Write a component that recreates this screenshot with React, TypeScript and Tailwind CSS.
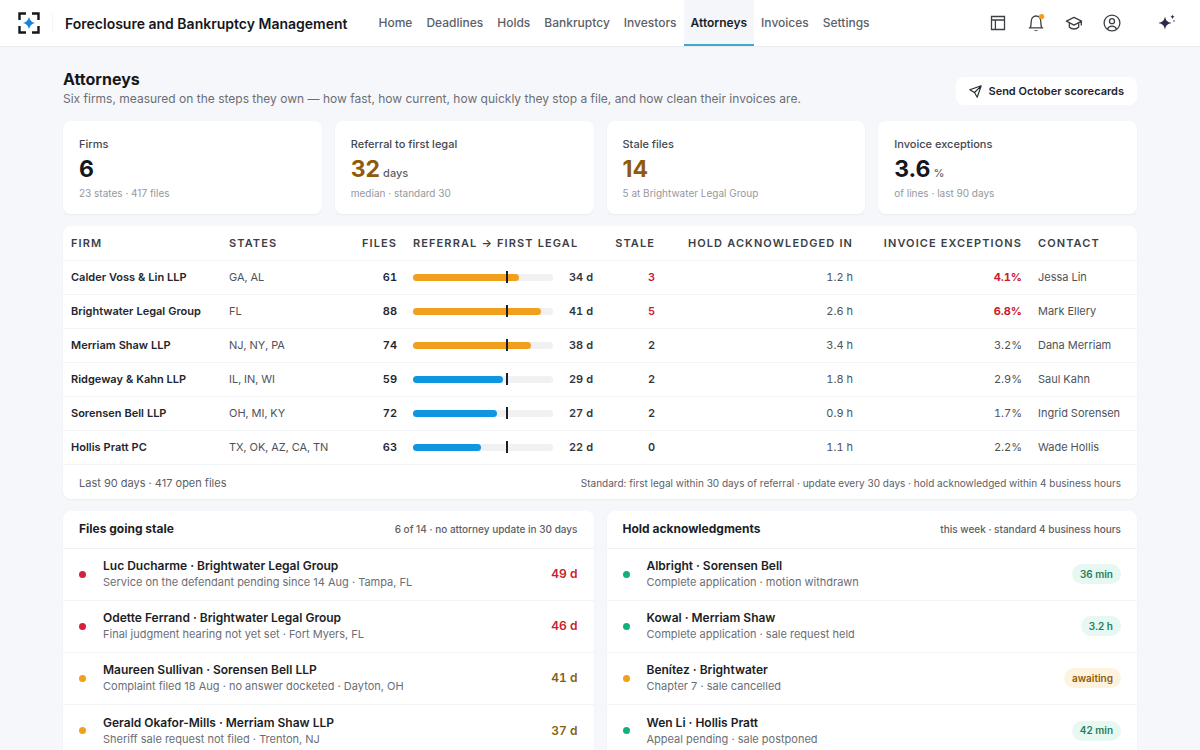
import type { ReactNode } from "react";
import clsx from "clsx";

type Tone = "red" | "amber" | "green";

const navItems = [
  "Home",
  "Deadlines",
  "Holds",
  "Bankruptcy",
  "Investors",
  "Attorneys",
  "Invoices",
  "Settings",
];

const stats = [
  { label: "Firms", value: "6", unit: "", note: "23 states · 417 files", warn: false },
  { label: "Referral to first legal", value: "32", unit: "days", note: "median · standard 30", warn: true },
  { label: "Stale files", value: "14", unit: "", note: "5 at Brightwater Legal Group", warn: true },
  { label: "Invoice exceptions", value: "3.6", unit: "%", note: "of lines · last 90 days", warn: false },
];

const STANDARD_DAYS = 30;
const MAX_DAYS = 45;

const firms = [
  { name: "Calder Voss & Lin LLP", states: "GA, AL", files: 61, days: 34, stale: 3, hold: "1.2 h", exceptions: 4.1, contact: "Jessa Lin" },
  { name: "Brightwater Legal Group", states: "FL", files: 88, days: 41, stale: 5, hold: "2.6 h", exceptions: 6.8, contact: "Mark Ellery" },
  { name: "Merriam Shaw LLP", states: "NJ, NY, PA", files: 74, days: 38, stale: 2, hold: "3.4 h", exceptions: 3.2, contact: "Dana Merriam" },
  { name: "Ridgeway & Kahn LLP", states: "IL, IN, WI", files: 59, days: 29, stale: 2, hold: "1.8 h", exceptions: 2.9, contact: "Saul Kahn" },
  { name: "Sorensen Bell LLP", states: "OH, MI, KY", files: 72, days: 27, stale: 2, hold: "0.9 h", exceptions: 1.7, contact: "Ingrid Sorensen" },
  { name: "Hollis Pratt PC", states: "TX, OK, AZ, CA, TN", files: 63, days: 22, stale: 0, hold: "1.1 h", exceptions: 2.2, contact: "Wade Hollis" },
];

const staleFiles: { title: string; detail: string; days: number; tone: Tone }[] = [
  { title: "Luc Ducharme · Brightwater Legal Group", detail: "Service on the defendant pending since 14 Aug · Tampa, FL", days: 49, tone: "red" },
  { title: "Odette Ferrand · Brightwater Legal Group", detail: "Final judgment hearing not yet set · Fort Myers, FL", days: 46, tone: "red" },
  { title: "Maureen Sullivan · Sorensen Bell LLP", detail: "Complaint filed 18 Aug · no answer docketed · Dayton, OH", days: 41, tone: "amber" },
  { title: "Gerald Okafor-Mills · Merriam Shaw LLP", detail: "Sheriff sale request not filed · Trenton, NJ", days: 37, tone: "amber" },
];

const holds: { title: string; detail: string; status: string; tone: Tone }[] = [
  { title: "Albright · Sorensen Bell", detail: "Complete application · motion withdrawn", status: "36 min", tone: "green" },
  { title: "Kowal · Merriam Shaw", detail: "Complete application · sale request held", status: "3.2 h", tone: "green" },
  { title: "Benítez · Brightwater", detail: "Chapter 7 · sale cancelled", status: "awaiting", tone: "amber" },
  { title: "Wen Li · Hollis Pratt", detail: "Appeal pending · sale postponed", status: "42 min", tone: "green" },
];

const dotColor = {
  red: "bg-[#d0213f]",
  amber: "bg-[#f0a01c]",
  green: "bg-[#12b07c]",
};

const IconButton = ({ label, children }: { label: string; children: ReactNode }) => (
  <button
    type="button"
    aria-label={label}
    className="w-[38px] h-[38px] flex items-center justify-center text-[#3c3f45]"
  >
    {children}
  </button>
);

const Header = () => {
  return (
    <header className="h-[47px] flex items-center bg-white border-b border-[#e9ebee] pl-[18px] pr-[14px]">
      <svg width="22" height="22" viewBox="0 0 22 22" fill="none" aria-hidden="true">
        <path
          d="M1.500 8V1.500H8M14 1.500h6.500V8M20.500 14v6.500H14M8 20.500H1.500V14"
          stroke="#15171c"
          strokeWidth="2.400"
        />
        <path
          d="M11 5c1 3.500 2.500 5 6 6-3.500 1-5 2.500-6 6-1-3.500-2.500-5-6-6 3.500-1 5-2.500 6-6z"
          fill="#1583dc"
        />
      </svg>
      <div className="w-px h-5 mx-3 bg-[#f3f4f6]" />
      <div className="text-[14px] font-semibold text-[#15171c] whitespace-nowrap">
        Foreclosure and Bankruptcy Management
      </div>
      <nav className="flex self-stretch ml-6 flex-1">
        {navItems.map((item) => (
          <a
            key={item}
            href="#"
            aria-current={item === "Attorneys" ? "page" : undefined}
            className={clsx(
              "flex items-center px-[7px] pt-[2px] text-[12px] border-b-2",
              item === "Attorneys"
                ? "font-semibold text-[#1b1e27] bg-[#f5f6fa] border-[#3fa9cc]"
                : "font-medium text-[#5d6066] border-transparent"
            )}
          >
            {item}
          </a>
        ))}
      </nav>
      <div className="flex items-center">
        <IconButton label="Layout">
          <svg width="16" height="16" viewBox="0 0 16 16" fill="none" stroke="currentColor" strokeWidth="1.300">
            <path d="M1.500 1.500h13v13h-13zM1.500 5h13M5.400 5v9.500" />
          </svg>
        </IconButton>
        <IconButton label="Notifications">
          <svg width="18" height="20" viewBox="0 0 18 20" fill="none" stroke="currentColor" strokeWidth="1.300">
            <path d="M1.800 14.900h14.400M3.200 14.700c.9-1.600 1-3.700 1-6 0-3.400 1.900-5.700 4.800-5.700s4.800 2.300 4.800 5.700c0 2.300.1 4.400 1 6" />
            <path d="M7 17.300c.5 1.200 3.500 1.200 4 0z" fill="currentColor" stroke="none" />
            <circle cx="14.600" cy="3.600" r="2.700" fill="#f0a01c" stroke="none" />
          </svg>
        </IconButton>
        <IconButton label="Training">
          <svg width="18" height="16" viewBox="0 0 18 16" fill="none" stroke="currentColor" strokeWidth="1.300" strokeLinejoin="round">
            <path d="M9 2.300L1.400 6.200 9 10.100l7.600-3.900zM4.300 8v4c1.200 1.300 2.800 2 4.700 2s3.500-.7 4.700-2V8M16.300 6.400v4" />
          </svg>
        </IconButton>
        <IconButton label="Account">
          <svg width="18" height="18" viewBox="0 0 18 18" fill="none" stroke="currentColor" strokeWidth="1.300">
            <circle cx="9" cy="9" r="7.900" />
            <circle cx="9" cy="7.200" r="2.500" />
            <path d="M4.300 15.200c.8-2 2.500-3.100 4.700-3.100s3.900 1.100 4.700 3.100" />
          </svg>
        </IconButton>
      </div>
      <div className="ml-[17px]">
        <IconButton label="Assistant">
          <svg width="20" height="18" viewBox="0 0 20 18" fill="#2a2a4a">
            <path d="M8 2.500c1 4.200 2.300 5.500 6.500 6.500-4.200 1-5.500 2.300-6.500 6.500-1-4.200-2.300-5.500-6.500-6.500 4.200-1 5.500-2.300 6.500-6.500z" />
            <path d="M15.500.4c.4 1.400.9 1.900 2.300 2.300-1.400.4-1.900.9-2.300 2.300-.4-1.400-.9-1.900-2.300-2.300 1.400-.4 1.900-.9 2.300-2.300z" />
            <circle cx="17" cy="7" r="1" fill="#8d8da3" />
          </svg>
        </IconButton>
      </div>
    </header>
  );
};

const ReferralBar = ({ days }: { days: number }) => (
  <div className="flex items-center">
    <div className="relative w-[140px] h-[7px] rounded-full bg-[#f1f1f3]">
      <div
        className={clsx("h-full rounded-full", days > STANDARD_DAYS ? "bg-[#f0a01c]" : "bg-[#0e96e0]")}
        style={{ width: `${(days / MAX_DAYS) * 100}%` }}
      />
      <div
        className="absolute -top-[3px] w-[2px] h-3 bg-[#1b1e27]"
        style={{ left: `${(STANDARD_DAYS / MAX_DAYS) * 100}%` }}
      />
    </div>
    <span className="w-10 text-right font-semibold text-[#33363d]">{days} d</span>
  </div>
);

const FirmTable = () => {
  return (
    <section className="bg-white rounded-lg shadow-xs overflow-hidden">
      <table className="w-full table-fixed text-[11px] tabular-nums text-[#4f5259]">
        <thead>
          <tr className="h-[34px] border-b border-[#f3f4f6] text-left tracking-widest text-[#3c3f45] whitespace-nowrap [&>th]:px-2 [&>th]:font-semibold">
            <th className="w-[158px]">FIRM</th>
            <th className="w-[125px]">STATES</th>
            <th className="w-[59px] text-right">FILES</th>
            <th className="w-[196px]">REFERRAL → FIRST LEGAL</th>
            <th className="w-[62px] text-right">STALE</th>
            <th className="w-[198px] text-right">HOLD ACKNOWLEDGED IN</th>
            <th className="w-[169px] text-right">INVOICE EXCEPTIONS</th>
            <th className="w-[107px]">CONTACT</th>
          </tr>
        </thead>
        <tbody>
          {firms.map((firm) => (
            <tr
              key={firm.name}
              className="h-[34px] border-b border-[#f3f4f6] whitespace-nowrap [&>td]:px-2"
            >
              <td className="font-semibold text-[#23262d]">{firm.name}</td>
              <td>{firm.states}</td>
              <td className="text-right font-semibold text-[#23262d]">{firm.files}</td>
              <td>
                <ReferralBar days={firm.days} />
              </td>
              <td
                className={clsx(
                  "text-right font-semibold",
                  firm.stale > 2 ? "text-[#c8202f]" : "text-[#33363d]"
                )}
              >
                {firm.stale}
              </td>
              <td className="text-right">{firm.hold}</td>
              <td className={clsx("text-right", firm.exceptions > 4 && "font-bold text-[#c8202f]")}>
                {firm.exceptions}%
              </td>
              <td>{firm.contact}</td>
            </tr>
          ))}
        </tbody>
      </table>
      <div className="h-[34px] flex items-center justify-between px-4 pt-1 text-[#5d6066]">
        <span className="text-[11px]">Last 90 days · 417 open files</span>
        <span className="text-[10px]">
          Standard: first legal within 30 days of referral · update every 30 days · hold acknowledged within 4 business hours
        </span>
      </div>
    </section>
  );
};

const Panel = ({ title, note, children }: { title: string; note: string; children: ReactNode }) => (
  <section className="bg-white rounded-lg shadow-xs pb-2">
    <div className="h-[38px] flex items-center justify-between px-4 border-b border-[#eef0f2]">
      <h2 className="text-[12px] font-bold text-[#1b1e27]">{title}</h2>
      <span className="text-[10px] font-medium text-[#5d6066]">{note}</span>
    </div>
    <ul>{children}</ul>
  </section>
);

const PanelRow = ({
  title,
  detail,
  tone,
  children,
}: {
  title: string;
  detail: string;
  tone: Tone;
  children: ReactNode;
}) => (
  <li className="h-[52px] flex items-center px-4 border-b border-[#f3f4f6] last:border-b-0">
    <span className={clsx("size-[7px] rounded-full mr-[17px]", dotColor[tone])} />
    <div className="flex-1">
      <div className="text-[12px] leading-4 font-semibold text-[#1b1e27]">{title}</div>
      <div className="text-[11px] leading-4 text-[#6b6e75]">{detail}</div>
    </div>
    {children}
  </li>
);

const App = () => {
  return (
    <div className="min-h-screen bg-[#f6f7fa] font-['Inter',sans-serif]">
      <Header />
      <main className="px-[63px] pt-[22px] pb-3 flex flex-col gap-3">
        <div className="flex items-center justify-between h-[40px]">
          <div>
            <h1 className="text-[16px] leading-5 font-bold text-[#15171c]">Attorneys</h1>
            <p className="text-[12px] leading-5 text-[#6b6e75]">
              Six firms, measured on the steps they own — how fast, how current, how quickly they stop a file, and how clean their invoices are.
            </p>
          </div>
          <button
            type="button"
            className="h-7 mt-1 flex items-center gap-[6px] px-[13px] rounded-lg bg-white text-[11px] font-semibold text-[#23262d]"
          >
            <svg width="13" height="13" viewBox="0 0 13 13" fill="none" stroke="currentColor" strokeWidth="1.100" strokeLinejoin="round">
              <path d="M12.200.8L.8 4.800l4.700 2.700 2.700 4.700zM12.200.8L5.500 7.500" />
            </svg>
            Send October scorecards
          </button>
        </div>

        <div className="grid grid-cols-4 gap-[13px]">
          {stats.map((stat) => (
            <div key={stat.label} className="h-[93px] px-4 pt-[14px] bg-white rounded-lg shadow-xs">
              <div className="text-[11px] leading-[18px] font-medium text-[#45484f]">{stat.label}</div>
              <div className="h-8 flex items-baseline gap-[3px]">
                <span
                  className={clsx(
                    "text-[23px] leading-8 font-bold",
                    stat.warn ? "text-[#8f5a0a]" : "text-[#15171c]"
                  )}
                >
                  {stat.value}
                </span>
                {stat.unit && (
                  <span className="text-[11px] leading-4 font-medium text-[#5d6066]">{stat.unit}</span>
                )}
              </div>
              <div className="text-[10px] leading-4 text-[#96989e]">{stat.note}</div>
            </div>
          ))}
        </div>

        <FirmTable />

        <div className="grid grid-cols-2 gap-[13px]">
          <Panel title="Files going stale" note="6 of 14 · no attorney update in 30 days">
            {staleFiles.map((file) => (
              <PanelRow key={file.title} title={file.title} detail={file.detail} tone={file.tone}>
                <span
                  className={clsx(
                    "text-[12px] font-semibold tabular-nums",
                    file.tone === "red" ? "text-[#c8202f]" : "text-[#85600f]"
                  )}
                >
                  {file.days} d
                </span>
              </PanelRow>
            ))}
          </Panel>
          <Panel title="Hold acknowledgments" note="this week · standard 4 business hours">
            {holds.map((hold) => (
              <PanelRow key={hold.title} title={hold.title} detail={hold.detail} tone={hold.tone}>
                <span
                  className={clsx(
                    "h-5 flex items-center px-2 rounded-full text-[10px] font-semibold",
                    hold.tone === "green"
                      ? "bg-[#e6f8f1] text-[#1f7f5c]"
                      : "bg-[#fdf3df] text-[#8f5a0a]"
                  )}
                >
                  {hold.status}
                </span>
              </PanelRow>
            ))}
          </Panel>
        </div>
      </main>
    </div>
  );
};

export default App;
